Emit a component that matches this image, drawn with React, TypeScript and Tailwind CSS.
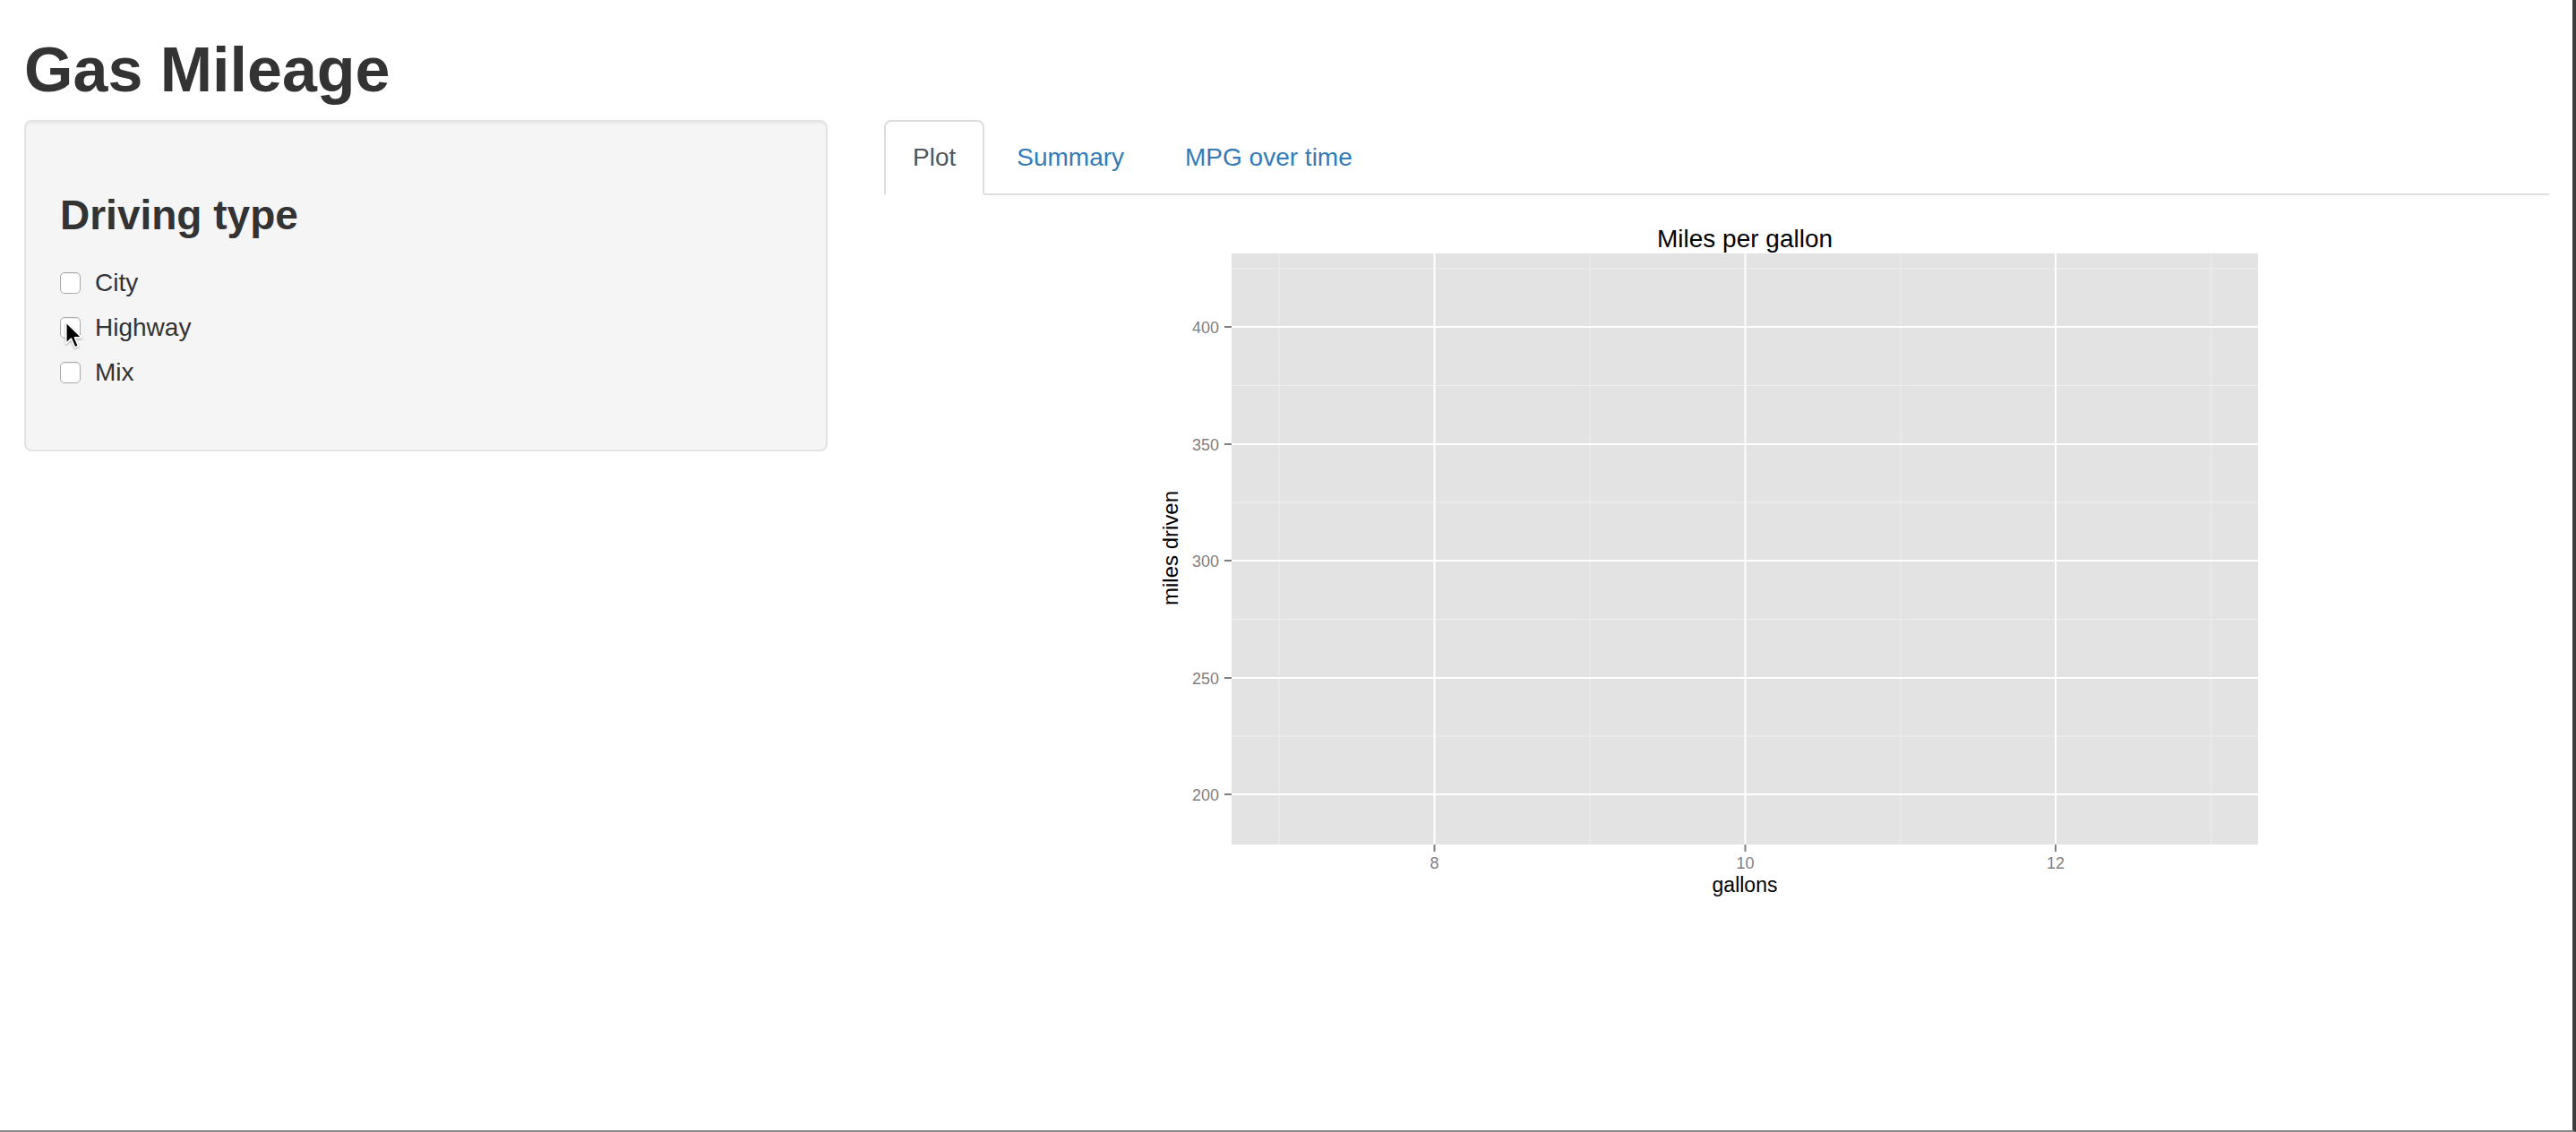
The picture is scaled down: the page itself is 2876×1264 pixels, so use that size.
import React from 'react';

const options = ['City', 'Highway', 'Mix'];

const xMajor = [
  { x: 614.5, label: '8' },
  { x: 961.5, label: '10' },
  { x: 1308, label: '12' },
];
const xMinor = [441, 788, 1135, 1481.5];
const yMajor = [
  { y: 147, label: '400' },
  { y: 278, label: '350' },
  { y: 408, label: '300' },
  { y: 539, label: '250' },
  { y: 669, label: '200' },
];
const yMinor = [82, 212.5, 343, 473.5, 604];

const svgFont = 'Liberation Sans, Arial, sans-serif';

function Cursor() {
  return (
    <svg
      className="absolute left-[5px] top-[12px] drop-shadow-[0_1px_1px_rgba(0,0,0,0.35)]"
      width="22"
      height="32"
      viewBox="0 0 13 19"
    >
      <path
        d="M1 1 L1 15.2 L4.4 12 L6.9 17.8 L9.2 16.8 L6.8 11.2 L11.4 11.2 Z"
        fill="#000"
        stroke="#fff"
        strokeWidth="1"
        strokeLinejoin="round"
      />
    </svg>
  );
}

function MileagePlot() {
  return (
    <svg width="1859" height="830" className="block">
      {/* panel */}
      <rect x="388" y="65" width="1146" height="660" fill="#e3e3e3" />
      {xMinor.map((x) => (
        <line key={'xm' + x} x1={x} x2={x} y1="65" y2="725" stroke="#efefef" strokeWidth="1" />
      ))}
      {yMinor.map((y) => (
        <line key={'ym' + y} x1="388" x2="1534" y1={y} y2={y} stroke="#efefef" strokeWidth="1" />
      ))}
      {xMajor.map((t) => (
        <line key={'xM' + t.x} x1={t.x} x2={t.x} y1="65" y2="725" stroke="#fff" strokeWidth="2" />
      ))}
      {yMajor.map((t) => (
        <line key={'yM' + t.y} x1="388" x2="1534" y1={t.y} y2={t.y} stroke="#fff" strokeWidth="2" />
      ))}

      {/* axes */}
      {yMajor.map((t) => (
        <g key={'yl' + t.y}>
          <line x1="380" x2="388" y1={t.y} y2={t.y} stroke="#7f7f7f" strokeWidth="2" />
          <text x="374" y={t.y + 6.5} textAnchor="end" fontSize="18" fill="#7f7f7f" fontFamily={svgFont}>
            {t.label}
          </text>
        </g>
      ))}
      {xMajor.map((t) => (
        <g key={'xl' + t.x}>
          <line x1={t.x} x2={t.x} y1="725" y2="733" stroke="#7f7f7f" strokeWidth="2" />
          <text x={t.x} y="752" textAnchor="middle" fontSize="18" fill="#7f7f7f" fontFamily={svgFont}>
            {t.label}
          </text>
        </g>
      ))}

      {/* labels */}
      <text x="961" y="58" textAnchor="middle" fontSize="28" fill="#000" fontFamily={svgFont}>
        Miles per gallon
      </text>
      <text x="961" y="778" textAnchor="middle" fontSize="23" fill="#000" fontFamily={svgFont}>
        gallons
      </text>
      <text
        x="0"
        y="0"
        transform="translate(328 394) rotate(-90)"
        textAnchor="middle"
        fontSize="24"
        fill="#000"
        fontFamily={svgFont}
      >
        miles driven
      </text>
    </svg>
  );
}

export default function App() {
  return (
    <div className="w-[2876px] h-[1264px] overflow-hidden bg-white border-r-4 border-r-[#3d3d3d] border-b-2 border-b-[#8a8a8a] font-['Liberation_Sans','Arial',sans-serif] text-[#333]">
      <div className="px-[27px]">
        <h1 className="mt-[39px] mb-[16px] text-[70px] leading-[79px] font-bold">Gas Mileage</h1>

        <div className="flex items-start gap-[63px]">
          {/* sidebar */}
          <div className="w-[897px] shrink-0 rounded-[8px] border-2 border-[#e3e3e3] bg-[#f5f5f5] px-[38px] pt-[38px] pb-[66px] shadow-[inset_0_2px_2px_rgba(0,0,0,0.05)]">
            <h3 className="mt-[40px] mb-[29px] text-[46px] leading-[53px] font-bold">Driving type</h3>
            <div className="flex flex-col gap-[10px]">
              {options.map((o) => (
                <label key={o} className="relative flex h-[40px] items-center text-[28px] leading-[40px]">
                  <span className="h-[24px] w-[23px] rounded-[5px] border-[1.5px] border-[#aaa] bg-white shadow-[inset_0_1px_1px_rgba(0,0,0,0.08)]" />
                  <span className="ml-[16px]">{o}</span>
                  {o === 'Highway' && <Cursor />}
                </label>
              ))}
            </div>
          </div>

          {/* main */}
          <div className="flex-1">
            <div className="flex border-b-2 border-[#ddd] text-[28px] leading-[40px]">
              <div className="mr-[4px] -mb-[2px] rounded-t-[8px] border-2 border-[#ddd] border-b-transparent bg-white px-[30px] py-[20px] text-[#555]">
                Plot
              </div>
              <div className="mr-[4px] -mb-[2px] border-2 border-transparent px-[30px] py-[20px] text-[#337ab7]">
                Summary
              </div>
              <div className="mr-[4px] -mb-[2px] border-2 border-transparent px-[30px] py-[20px] text-[#337ab7]">
                MPG over time
              </div>
            </div>
            <MileagePlot />
          </div>
        </div>
      </div>
    </div>
  );
}
